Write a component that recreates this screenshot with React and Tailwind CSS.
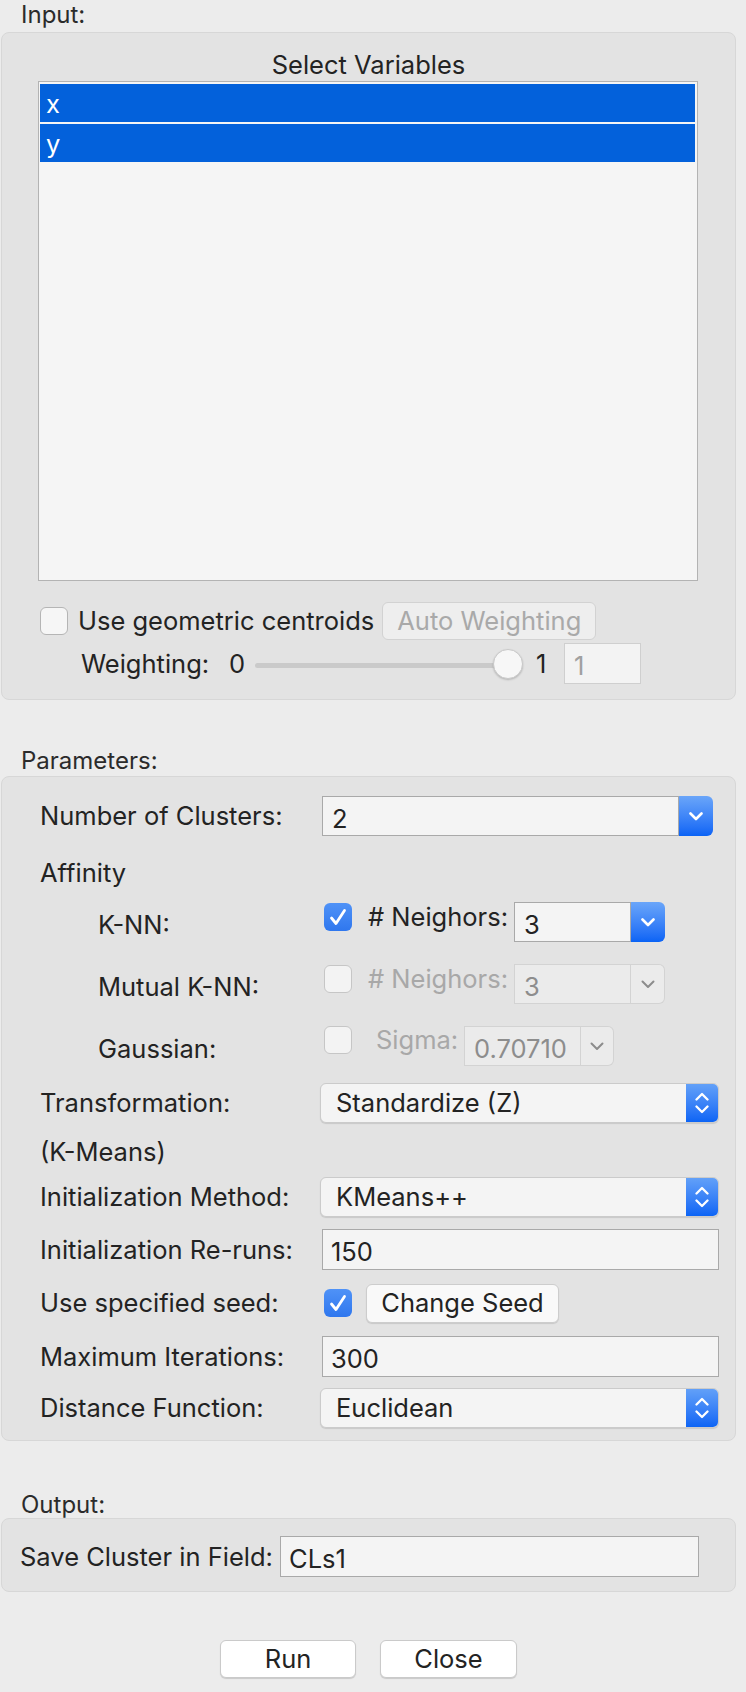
import React from "react";

const ChevronDown = ({ color = "white", width = "2.6" }) => (
  <svg width="14" height="9" viewBox="0 0 14 9">
    <path d="M1.5 1.5 L7 7 L12.5 1.5" fill="none" stroke={color} strokeWidth={width} strokeLinecap="round" strokeLinejoin="round" />
  </svg>
);

const Stepper = () => (
  <svg width="14" height="24" viewBox="0 0 14 24">
    <path d="M1.5 8.5 L7 3 L12.5 8.5" fill="none" stroke="white" strokeWidth="2.3" strokeLinecap="round" strokeLinejoin="round" />
    <path d="M1.5 15.5 L7 21 L12.5 15.5" fill="none" stroke="white" strokeWidth="2.3" strokeLinecap="round" strokeLinejoin="round" />
  </svg>
);

const CheckBox = ({ checked, disabled, className = "" }) =>
  checked ? (
    <div className={`w-[28px] h-[28px] rounded-[6px] bg-linear-to-b from-[#4f92f7] to-[#2f77ee] flex items-center justify-center shrink-0 ${className}`}>
      <svg width="28" height="28" viewBox="0 0 28 28">
        <path d="M7.5 15 L12 20.5 L20.5 7.5" fill="none" stroke="white" strokeWidth="2.8" strokeLinecap="round" strokeLinejoin="round" />
      </svg>
    </div>
  ) : (
    <div
      className={`w-[28px] h-[28px] rounded-[6px] border shrink-0 ${
        disabled ? "border-[#c6c6c6] bg-[#f3f3f3]" : "border-[#b5b5b5] bg-[#f6f6f6]"
      } ${className}`}
    />
  );

const Combo = ({ value, className = "", arrowClass = "w-[34px]", disabled }) => (
  <div className={`flex h-[40px] shrink-0 ${className}`}>
    <div
      className={`flex-1 flex items-center pl-[9px] pt-[6px] border overflow-hidden whitespace-nowrap ${
        disabled ? "border-[#d3d3d3] bg-[#ebebeb] text-[#8d8d8d]" : "border-[#a9a9a9] bg-[#f4f4f4]"
      }`}
    >
      {value}
    </div>
    {disabled ? (
      <div className={`${arrowClass} flex items-center justify-center rounded-r-[6px] border border-l-0 border-[#d3d3d3] bg-[#ebebeb]`}>
        <ChevronDown color="#8c8c8c" width="2" />
      </div>
    ) : (
      <div className={`${arrowClass} flex items-center justify-center rounded-r-[6px] bg-linear-to-b from-[#6aa5f9] to-[#0963f5]`}>
        <ChevronDown />
      </div>
    )}
  </div>
);

const Popup = ({ value }) => (
  <div className="flex h-[40px] w-[399px] -ml-[2px] rounded-[6px] bg-[#f4f4f4] border border-[#cbcbcb] shadow-[0_1px_1px_rgba(0,0,0,0.12)] overflow-hidden">
    <div className="flex-1 flex items-center pl-[15px]">{value}</div>
    <div className="w-[32px] flex items-center justify-center bg-linear-to-b from-[#62a0f8] to-[#0b64f5]">
      <Stepper />
    </div>
  </div>
);

const TextField = ({ value, className = "w-[397px] h-[41px]" }) => (
  <div className={`flex items-center pl-[8px] pt-[4px] border border-[#a9a9a9] bg-[#f4f4f4] ${className}`}>{value}</div>
);

const SectionLabel = ({ children, className = "" }) => (
  <div className={`pl-[21px] text-[24px] leading-[26px] text-[#2b2b2b] ${className}`}>{children}</div>
);

const Row = ({ label, sub, className = "", children }) => (
  <div className={`flex items-center h-[40px] pl-[38px] ${className}`}>
    <div className={`w-[282px] shrink-0 ${sub ? "pl-[58px] pt-[6px]" : ""}`}>{label}</div>
    {children}
  </div>
);

export default function App() {
  return (
    <div className="w-[746px] h-[1692px] bg-[#ececec] font-[Inter,sans-serif] text-[25.5px] leading-[32px] text-[#232323] pt-[2px]">
      {/* Input */}
      <SectionLabel>Input:</SectionLabel>
      <div className="mt-[4px] ml-[1px] w-[735px] rounded-[8px] border border-[#d7d7d7] bg-[#e3e3e3] pt-[16px] pb-[15px]">
        <div className="text-center leading-[32px]">Select Variables</div>
        <div className="ml-[36px] w-[660px] h-[500px] border border-[#b3b3b3] bg-[#f5f5f5] p-[2px] pl-[1px]">
          <div className="h-[38px] bg-[#0361db] text-white pl-[6px] flex items-center pt-[2px]">x</div>
          <div className="mt-[2px] h-[38px] bg-[#0361db] text-white pl-[6px] flex items-center pt-[2px]">y</div>
        </div>

        <div className="mt-[21px] h-[38px] flex items-center">
          <CheckBox className="ml-[38px]" />
          <span className="ml-[10px]">Use geometric centroids</span>
          <button className="ml-[8px] w-[214px] h-[38px] rounded-[6px] border border-[#d2d2d2] bg-[#eeeeee] text-[#a9a9a9]">
            Auto Weighting
          </button>
        </div>

        <div className="mt-[3px] h-[41px] flex items-center">
          <span className="ml-[79px] w-[148px] shrink-0">Weighting:</span>
          <span className="w-[16px]">0</span>
          <div className="relative ml-[10px] w-[268px] h-[30px]">
            <div className="absolute left-0 right-[15px] top-[14px] h-[5px] rounded-full bg-[#cacaca]" />
            <div className="absolute right-0 top-0 w-[30px] h-[30px] rounded-full bg-[#f7f7f7] border border-[#c9c9c9] shadow-[0_1px_2px_rgba(0,0,0,0.2)]" />
          </div>
          <span className="ml-[13px] w-[15px]">1</span>
          <div className="ml-[13px] w-[77px] h-[41px] border border-[#cfcfcf] bg-[#f3f3f3] text-[#a0a0a0] pl-[9px] pt-[5px] flex items-center">
            1
          </div>
        </div>
      </div>

      {/* Parameters */}
      <SectionLabel className="mt-[48px]">Parameters:</SectionLabel>
      <div className="mt-[2px] ml-[1px] w-[735px] rounded-[8px] border border-[#d7d7d7] bg-[#e3e3e3] pb-[12px]">
        <Row label="Number of Clusters:" className="mt-[19px]">
          <Combo value="2" className="w-[391px]" />
        </Row>
        <Row label="Affinity" className="mt-[17px]" />
        <Row label="K-NN:" sub className="mt-[9px]">
          <div className="flex items-center mb-[10px]">
            <CheckBox checked className="ml-[2px]" />
            <span className="ml-[16px] w-[146px] shrink-0">{"# Neighors:"}</span>
          </div>
          <Combo value="3" className="w-[151px]" />
        </Row>
        <Row label="Mutual K-NN:" sub className="mt-[22px]">
          <div className="flex items-center mb-[10px] text-[#a8a8a8]">
            <CheckBox disabled className="ml-[2px]" />
            <span className="ml-[16px] w-[146px] shrink-0">{"# Neighors:"}</span>
          </div>
          <Combo value="3" disabled className="w-[151px]" />
        </Row>
        <Row label="Gaussian:" sub className="mt-[22px]">
          <div className="flex items-center mb-[12px] text-[#a8a8a8]">
            <CheckBox disabled className="ml-[2px]" />
            <span className="ml-[24px] w-[88px] shrink-0">Sigma:</span>
          </div>
          <Combo value="0.70710" disabled className="w-[150px]" arrowClass="w-[33px]" />
        </Row>
        <Row label="Transformation:" className="mt-[17px]">
          <Popup value="Standardize (Z)" />
        </Row>
        <Row label="(K-Means)" className="mt-[9px]" />
        <Row label="Initialization Method:" className="mt-[5px]">
          <Popup value="KMeans++" />
        </Row>
        <Row label="Initialization Re-runs:" className="mt-[12px] h-[41px]">
          <TextField value="150" />
        </Row>
        <Row label="Use specified seed:" className="mt-[13px]">
          <CheckBox checked className="ml-[2px]" />
          <button className="ml-[14px] w-[193px] h-[39px] rounded-[6px] bg-[#f9f9f9] border border-[#cdcdcd] shadow-[0_1px_1px_rgba(0,0,0,0.12)]">
            Change Seed
          </button>
        </Row>
        <Row label="Maximum Iterations:" className="mt-[13px] h-[41px]">
          <TextField value="300" />
        </Row>
        <Row label="Distance Function:" className="mt-[11px]">
          <Popup value="Euclidean" />
        </Row>
      </div>

      {/* Output */}
      <SectionLabel className="mt-[51px]">Output:</SectionLabel>
      <div className="ml-[1px] w-[735px] rounded-[8px] border border-[#d7d7d7] bg-[#e3e3e3] pt-[17px] pb-[14px]">
        <div className="flex items-center h-[41px] pl-[18px]">
          <span className="w-[260px] shrink-0">Save Cluster in Field:</span>
          <TextField value="CLs1" className="w-[419px] h-[41px]" />
        </div>
      </div>

      <div className="mt-[48px] ml-[1px] w-[735px] flex justify-center gap-[24px]">
        <button className="w-[136px] h-[38px] rounded-[6px] bg-white border border-[#cacaca] shadow-[0_1px_1px_rgba(0,0,0,0.15)]">
          Run
        </button>
        <button className="w-[137px] h-[38px] rounded-[6px] bg-white border border-[#cacaca] shadow-[0_1px_1px_rgba(0,0,0,0.15)]">
          Close
        </button>
      </div>
    </div>
  );
}
